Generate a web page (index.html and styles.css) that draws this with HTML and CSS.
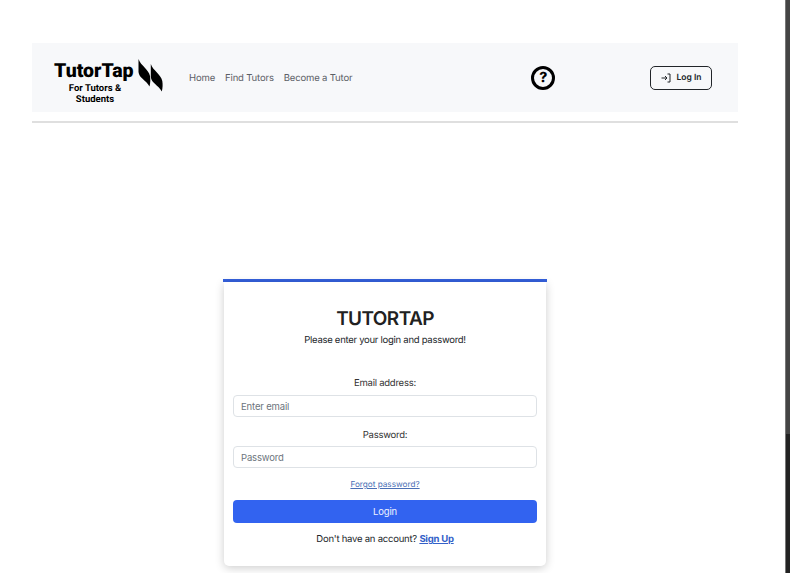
FILE: index.html
```html
<!DOCTYPE html>
<html lang="en">
<head>
<meta charset="utf-8">
<title>TutorTap</title>
<link rel="stylesheet" href="styles.css">
</head>
<body>
<div class="page">
  <header class="site-header">
    <nav class="navbar">
      <a class="brand" href="#">
        <span class="brand-text">
          <span class="brand-name">TutorTap</span>
          <span class="brand-sub">For Tutors &amp; Students</span>
        </span>
        <svg class="brand-mark" width="25" height="34" viewBox="0 0 25 34"><path d="M0.5 0L0.5 13C1 19 8 21 11.5 27.5C12.5 24 12.5 20 12 17C10.5 10 3 7 0.5 0Z"/><path transform="translate(12.3 5)" d="M0.5 0L0.5 13C1 19 8 21 11.5 27.5C12.5 24 12.5 20 12 17C10.5 10 3 7 0.5 0Z"/></svg>
      </a>
      <ul class="nav-links">
        <li><a href="#">Home</a></li>
        <li><a href="#">Find Tutors</a></li>
        <li><a href="#">Become a Tutor</a></li>
      </ul>
      <span class="help" aria-label="Help">?</span>
      <a class="login-btn" href="#">
        <svg width="10" height="10" viewBox="0 0 10 10" fill="none" stroke="currentColor" stroke-width="1"><path d="M0.5 5H6M4 3L6 5L4 7M6.5 1H9V9H6.5"/></svg>
        <span>Log In</span>
      </a>
    </nav>
    <hr class="rule">
  </header>
  <main class="main">
    <div class="card-bar"></div>
    <section class="card">
      <h1>TUTORTAP</h1>
      <p class="lead">Please enter your login and password!</p>
      <form class="form">
        <label class="field">Email address:
          <input type="email" placeholder="Enter email">
        </label>
        <label class="field">Password:
          <input type="password" placeholder="Password">
        </label>
        <a class="forgot" href="#">Forgot password?</a>
        <button type="button" class="submit">Login</button>
      </form>
      <p class="signup">Don't have an account? <a href="#">Sign Up</a></p>
    </section>
  </main>
</div>
<div class="edge"></div>
</body>
</html>
```
FILE: styles.css
```css
* { box-sizing: border-box; }
html, body { margin: 0; height: 573px; overflow: hidden; background: #fff; }
body { font-family: Inter, "Liberation Sans", sans-serif; color: #212529; display: flex; text-rendering: geometricPrecision; }
.page { width: 785px; padding: 43px 47px 0 32px; flex: none; }
.edge { flex: 1; border-left: 1px solid #777; background: linear-gradient(to bottom, #444 0, #444 434px, #222 434px); }
a { text-decoration: none; color: inherit; }

.navbar { height: 69px; background: #f7f8fa; display: flex; align-items: center; padding: 0 26px 0 22px; }
.brand { display: flex; align-items: flex-start; align-self: flex-start; padding-top: 16px; width: 135px; flex: none; }
.brand-text { width: 82px; display: flex; flex-direction: column; align-items: center; text-align: center; }
.brand-name { font-family: Roboto, sans-serif; font-weight: 900; font-size: 19.5px; line-height: 24px; color: #000; white-space: nowrap; align-self: flex-start; }
.brand-sub { font-family: Roboto, sans-serif; font-weight: 700; font-size: 9.5px; line-height: 11px; color: #000; width: 66px; }
.brand-mark { flex: none; margin-left: 2px; fill: #000; }
.nav-links { list-style: none; margin: 1px 0 0; padding: 0; display: flex; gap: 10px; font-size: 9.5px; letter-spacing: -0.15px; color: #5c6066; }
.help { margin-left: 179px; width: 24px; height: 24px; flex: none; border: 3px solid #000; border-radius: 50%; display: flex; align-items: center; justify-content: center; font-weight: 800; font-size: 14px; color: #000; }
.login-btn { margin-left: auto; width: 62px; height: 24px; flex: none; border: 1.5px solid #212529; border-radius: 5px; display: flex; align-items: center; justify-content: center; gap: 6px; font-size: 8.5px; font-weight: 600; color: #212529; }
.rule { height: 2px; border: 0; margin: 9px 0 0; background: #dfdfdf; }

.main { display: flex; flex-direction: column; align-items: center; padding-top: 156px; }
.card-bar { width: 324px; height: 3px; background: #3460dc; }
.card { width: 322px; height: 284px; border-radius: 0 0 5px 5px; background: #fff; box-shadow: 0 2px 10px rgba(0,0,0,.2); padding: 0 9px; text-align: center; }
h1 { margin: 24px 0 0; font-size: 19px; line-height: 26px; letter-spacing: -0.6px; font-weight: 600; color: #212121; }
.lead { margin: 1px 0 0; font-size: 9.5px; line-height: 16px; letter-spacing: -0.27px; }
.form { display: flex; flex-direction: column; margin-top: 27px; }
.field { display: flex; flex-direction: column; gap: 4px; font-size: 9.5px; line-height: 15px; letter-spacing: -0.25px; color: #333; margin-bottom: 10px; }
.field + .field { gap: 3px; margin-top: 1px; }
input { height: 22px; padding: 0 7px; border: 1px solid #dee2e6; border-radius: 4px; font: 9.5px Inter, "Liberation Sans", sans-serif; letter-spacing: -0.15px; }
input::placeholder { color: #6c757d; }
.forgot { font-size: 8.2px; line-height: 12px; color: #4a6fb5; text-decoration: underline; }
.submit { height: 23px; margin-top: 10px; border: 0; border-radius: 4px; background: #3263f0; color: #eef2ff; font: 9.5px Inter, "Liberation Sans", sans-serif; letter-spacing: -0.15px; }
.signup { margin: 9px 0 0; font-size: 9.5px; line-height: 15px; letter-spacing: -0.23px; }
.signup a { color: #3460c8; font-weight: 700; text-decoration: underline; }
```
